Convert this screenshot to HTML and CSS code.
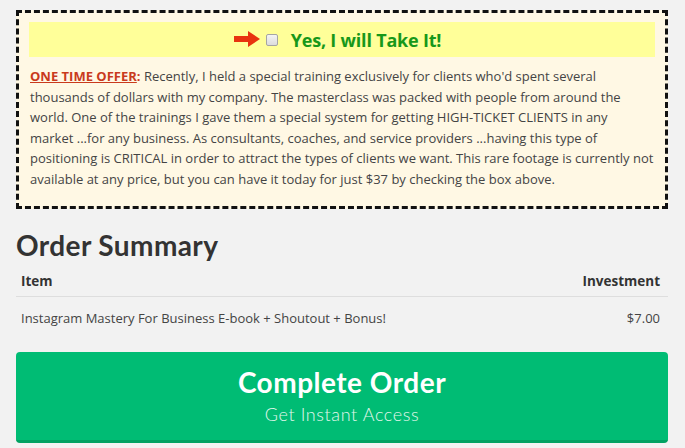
FILE: index.html
```html
<!DOCTYPE html>
<html>
<head>
<meta charset="utf-8">
<link rel="stylesheet" href="styles.css">
</head>
<body>
<div class="page">
  <div class="offer">
    <div class="take">
      <svg class="arrow" width="26" height="16" viewBox="0 0 26 16"><path d="M0 5 H14 V0 L26 8 L14 16 V11 H0 Z" fill="#e8330f"/></svg>
      <span class="cb"></span>
      <span class="yes">Yes, I will Take It!</span>
    </div>
    <p class="desc"><span class="oto">ONE TIME OFFER</span><span class="colon">:</span> Recently, I held a special training exclusively for clients who'd spent several<br>thousands of dollars with my company. The masterclass was packed with people from around the<br>world. One of the trainings I gave them a special system for getting HIGH-TICKET CLIENTS in any<br>market ...for any business. As consultants, coaches, and service providers ...having this type of<br>positioning is CRITICAL in order to attract the types of clients we want. This rare footage is currently not<br>available at any price, but you can have it today for just $37 by checking the box above.</p>
  </div>
  <h2 class="title">Order Summary</h2>
  <div class="table">
    <div class="row head"><span>Item</span><span>Investment</span></div>
    <div class="row item"><span>Instagram Mastery For Business E-book + Shoutout + Bonus!</span><span>$7.00</span></div>
  </div>
  <div class="btn">
    <div class="btn-main">Complete Order</div>
    <div class="btn-sub">Get Instant Access</div>
  </div>
</div>
</body>
</html>
```
FILE: styles.css
```css
html, body { margin: 0; padding: 0; }
body { background: #f2f2f2; font-family: "Open Sans", "Liberation Sans", sans-serif; overflow: hidden; }
.page { padding: 10px 17px 0 16px; }
.offer {
  border: 3px dashed #111;
  background: #fff8e4;
  padding: 9px 10px 17px 10px;
}
.take {
  background: #ffff99;
  height: 35px;
  display: flex;
  align-items: center;
  justify-content: center;
  padding-right: 9px;
}
.arrow { margin-right: 6px; margin-top: -1px; }
.cb {
  width: 10px; height: 10px;
  border: 1px solid #a5a5a5;
  border-radius: 2px;
  background: linear-gradient(#f4f4f4, #dcdcdc);
  margin-right: 13px;
}
.yes { color: #17981a; font-weight: 700; font-size: 18px; letter-spacing: -0.2px; }
.desc {
  margin: 9px -8px 0 1px;
  font-size: 13px;
  line-height: 20.5px;
  color: #444;
}
.oto { color: #c93a1d; font-weight: 700; text-decoration: underline; }
.colon { color: #c93a1d; font-weight: 700; }
.title {
  font-family: "Lato", "Open Sans", sans-serif;
  font-weight: 700;
  font-size: 28px;
  letter-spacing: 0.4px;
  color: #333;
  margin: 18px 0 0 0;
  line-height: 36px;
}
.table { margin-top: 4px; }
.row { display: flex; justify-content: space-between; padding: 0 8px 0 5px; }
.head { font-weight: 700; font-size: 13.5px; color: #333; height: 29px; line-height: 29px; border-bottom: 1px solid #dedede; }
.item { font-size: 13px; color: #444; height: 42px; line-height: 42px; }
.btn {
  margin-top: 13px;
  background: #00bc74;
  border-radius: 4px;
  border-bottom: 3px solid #00a262;
  height: 88px;
  display: flex;
  flex-direction: column;
  align-items: center;
  justify-content: center;
  color: #fff;
  font-family: "Lato", "Open Sans", sans-serif;
}
.btn-main { font-size: 28px; font-weight: 700; line-height: 32px; letter-spacing: 0.5px; }
.btn-sub { font-size: 18px; font-weight: 300; color: #e2f7ec; line-height: 26px; margin-top: 3px; letter-spacing: 0.6px; }
```
